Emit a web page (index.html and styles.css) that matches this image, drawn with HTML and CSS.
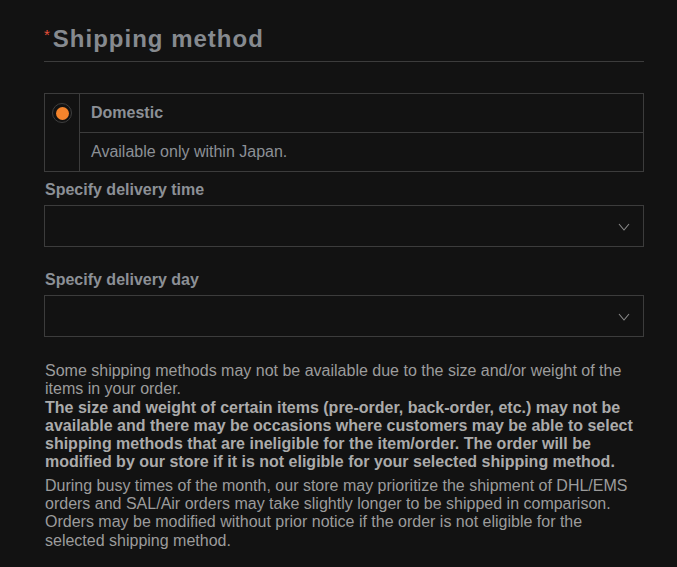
FILE: index.html
```html
<!DOCTYPE html>
<html lang="en">
<head>
<meta charset="utf-8">
<title>Shipping method</title>
<link rel="stylesheet" href="styles.css">
</head>
<body>
<div class="page">
  <section class="shipping">
    <h2 class="title"><span class="req">*</span>Shipping method</h2>

    <div class="method">
      <div class="method-radio"><span class="radio"><span class="dot"></span></span></div>
      <div class="method-name">Domestic</div>
      <div class="method-desc">Available only within Japan.</div>
    </div>

    <div class="field">
      <div class="label">Specify delivery time</div>
      <div class="select">
        <svg class="chev" width="12" height="8" viewBox="0 0 12 8"><path d="M1 1 L6 7 L11 1" fill="none" stroke="#8a8a8a" stroke-width="1.1"/></svg>
      </div>
    </div>

    <div class="field field-gap">
      <div class="label">Specify delivery day</div>
      <div class="select">
        <svg class="chev" width="12" height="8" viewBox="0 0 12 8"><path d="M1 1 L6 7 L11 1" fill="none" stroke="#8a8a8a" stroke-width="1.1"/></svg>
      </div>
    </div>

    <div class="notes">
      <p class="note">Some shipping methods may not be available due to the size and/or weight of the items in your order.<br><strong>The size and weight of certain items (pre-order, back-order, etc.) may not be available and there may be occasions where customers may be able to select shipping methods that are ineligible for the item/order. The order will be modified by our store if it is not eligible for your selected shipping method.</strong></p>
      <p class="note">During busy times of the month, our store may prioritize the shipment of DHL/EMS orders and SAL/Air orders may take slightly longer to be shipped in comparison. Orders may be modified without prior notice if the order is not eligible for the selected shipping method.</p>
    </div>
  </section>
</div>
</body>
</html>
```

FILE: styles.css
```css
html, body {
  margin: 0;
  padding: 0;
  background: #121212;
}

body {
  font-family: "Liberation Sans", Arial, sans-serif;
  color: #9a9a9a;
}

.page {
  padding: 25px 0 20px 44px;
}

.shipping {
  width: 600px;
}

.title {
  margin: 0;
  font-size: 24px;
  line-height: 28px;
  font-weight: bold;
  letter-spacing: 1px;
  color: #868a8f;
  padding-bottom: 8px;
  border-bottom: 1px solid #3c3c3c;
  display: flex;
  align-items: flex-start;
}

.req {
  color: #e8503a;
  font-size: 15px;
  line-height: 15px;
  letter-spacing: 0;
  margin-top: 2px;
  margin-right: 3px;
  font-weight: normal;
}

.method {
  margin-top: 31px;
  border: 1px solid #3c3c3c;
  display: grid;
  grid-template-columns: 35px 1fr;
  grid-template-rows: 39px 38px;
}

.method-radio {
  grid-row: 1 / span 2;
  border-right: 1px solid #3c3c3c;
  display: flex;
  justify-content: center;
  padding-top: 9px;
}

.radio {
  width: 20px;
  height: 20px;
  box-sizing: border-box;
  border: 1px solid #3e3e3e;
  border-radius: 50%;
  display: flex;
  align-items: center;
  justify-content: center;
}

.dot {
  width: 13px;
  height: 13px;
  border-radius: 50%;
  background: #f4842c;
}

.method-name {
  border-bottom: 1px solid #3c3c3c;
  padding-left: 11px;
  font-size: 16px;
  font-weight: bold;
  line-height: 38px;
  color: #8c9096;
}

.method-desc {
  padding-left: 11px;
  font-size: 16px;
  line-height: 38px;
  color: #8c9096;
}

.field {
  margin-top: 8px;
}

.field-gap {
  margin-top: 23px;
}

.label {
  font-size: 16px;
  font-weight: bold;
  line-height: 20px;
  color: #8c9096;
  padding-left: 1px;
}

.select {
  margin-top: 5px;
  height: 42px;
  box-sizing: border-box;
  border: 1px solid #3c3c3c;
  display: flex;
  align-items: center;
  justify-content: flex-end;
  padding-right: 13px;
}

.chev {
  display: block;
  margin-top: 1px;
}

.notes {
  margin-top: 25px;
}

.note {
  margin: 0;
  font-size: 16px;
  line-height: 18.3px;
  color: #9c9c9c;
  padding-left: 1px;
}

.note + .note {
  margin-top: 5px;
}

.note strong {
  color: #ababab;
}
```
